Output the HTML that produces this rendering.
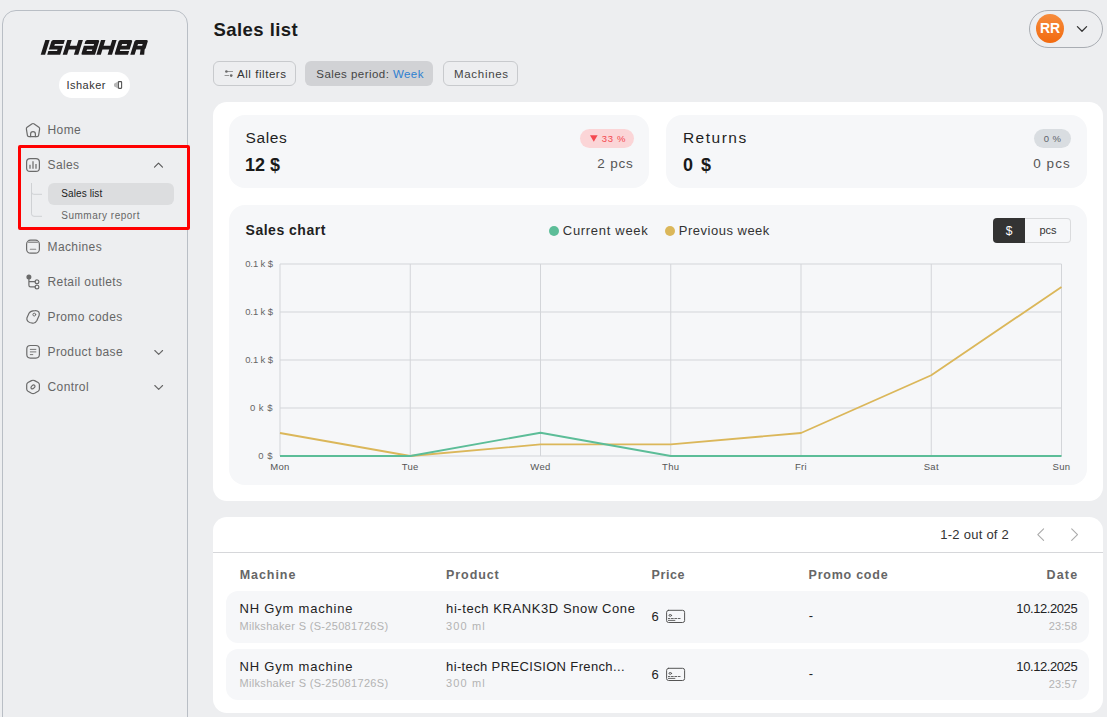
<!DOCTYPE html>
<html><head><meta charset="utf-8">
<style>
html,body{margin:0;padding:0}
body{width:1107px;height:717px;overflow:hidden;background:#edeef0;position:relative;font-family:"Liberation Sans",sans-serif;color:#1f1f1f}
.a{position:absolute}
.t{position:absolute;line-height:1;white-space:nowrap}
svg{position:absolute;overflow:visible}
</style></head><body>

<!-- SIDEBAR -->
<div class="a" style="left:2px;top:10px;width:184px;height:740px;border:1px solid #b9bec5;border-radius:14px;"></div>

<div class="a" style="left:59px;top:72px;width:71px;height:26px;border-radius:13px;background:#fff"></div>
<svg id="logo" style="left:0;top:0" width="200" height="70">
<g transform="translate(0,54.7) skewX(-17.5)" fill="#1c1a1b">
<!-- I -->
<rect x="40.7" y="-14.6" width="4.4" height="14.6"/>
<!-- S -->
<path d="M48.7-14.6H60.2V-10.8H51.5V-8.9H60.2V0H47.2V-3.6H55.9V-5.2H47.2V-13.1Q47.2-14.6 48.7-14.6Z"/>
<!-- H -->
<path d="M62.7-14.6H67.1V-8.9H73.9V-14.6H78.3V0H73.9V-5.2H67.1V0H62.7Z"/>
<!-- a -->
<path d="M82.6-14.6H93.5Q95-14.6 95-13.1V0H82.6Q81.1 0 81.1-1.5V-8.9H90.7V-10.8H81.1V-13.1Q81.1-14.6 82.6-14.6ZM85.4-5.2V-3.6H90.7V-5.2Z" fill-rule="evenodd"/>
<!-- K/H -->
<path d="M96.4-14.6H100.8V-8.9H107.6V-14.6H112V0H107.6V-5.2H100.8V0H96.4Z"/>
<!-- e -->
<path d="M115.9-14.6H126.5Q128-14.6 128-13.1V-5.2H118.7V-3.6H128V0H115.9Q114.4 0 114.4-1.5V-13.1Q114.4-14.6 115.9-14.6ZM118.7-10.8V-8.9H123.7V-10.8Z" fill-rule="evenodd"/>
<!-- R -->
<path d="M131.8-14.6H142Q143.6-14.6 143.6-13.1V-6.7Q143.6-5.8 143-5.2L144.2 0H139.8L138.9-5.2H134.6V0H130.3V-13.1Q130.3-14.6 131.8-14.6ZM134.6-10.8V-8.9H139.3V-10.8Z" fill-rule="evenodd"/>
</g>
</svg>

<svg style="left:0;top:0" width="200" height="420" fill="none" stroke="#6b6b6b" stroke-width="1.2" stroke-linecap="round" stroke-linejoin="round">
<!-- logout -->
<rect x="118.4" y="81.6" width="3.2" height="6.8" rx="0.6" stroke="#555" stroke-width="1.1"/>
<path d="M114 83.8L118 81.5V88.6L114 86.2Z" fill="#b8b8b8" stroke="none"/>
<!-- home -->
<path d="M31.8 123.9Q33 123.1 34.2 123.9L38.9 127.3Q39.8 128 39.6 129.1L38.6 135.3Q38.4 136.6 37.1 136.6H28.9Q27.6 136.6 27.4 135.3L26.4 129.1Q26.2 128 27.1 127.3Z"/>
<path d="M30.6 136.6V134Q30.6 131.6 33 131.6Q35.4 131.6 35.4 134V136.6"/>
<!-- sales -->
<rect x="26.6" y="158.6" width="12.8" height="12.8" rx="3.5"/>
<path d="M30 164.8V168.7M33 161.2V168.7M36 163.9V168.7" stroke="#9a9a9a" stroke-width="1.9" stroke-linecap="butt"/>
<path d="M154.5 167.2L158.5 163.2L162.5 167.2" stroke="#555" stroke-width="1.1"/>
<!-- submenu lines -->
<path d="M31.5 183V213.8Q31.5 216.3 34 216.3H42M31.5 192Q31.5 194.3 33.8 194.3H42" stroke="#cfd1d4" stroke-width="1" stroke-linecap="butt"/>
<!-- machines -->
<rect x="26.6" y="240.2" width="12.8" height="13" rx="4"/>
<path d="M28.5 242.2H37.5" stroke-width="1"/>
<path d="M30.3 249.3H35.7" stroke="#888" stroke-width="1.1"/>
<!-- retail -->
<circle cx="28.9" cy="276.9" r="2.5" fill="#6b6b6b" stroke="none"/>
<path d="M28.9 277V285.2Q28.9 286.9 30.6 286.9H35.2M28.9 281.7H35.2"/>
<circle cx="37" cy="281.7" r="1.9"/>
<circle cx="37" cy="287" r="1.9"/>
<!-- promo -->
<path d="M35.2 310.6C38.4 310.4 40 312.8 39.1 315.6L36.9 320.6C35.9 322.7 34.6 323.4 32.6 323.2C28.3 322.8 26.3 320.4 26.9 317.9L29 313.3C30 311.4 32.6 310.7 35.2 310.6Z"/>
<circle cx="34.3" cy="314.6" r="1.4" stroke-width="1"/>
<!-- product base -->
<rect x="26.8" y="345.5" width="12.6" height="12.6" rx="3.5"/>
<path d="M30.3 349.4H35.9M30.3 351.9H35.9M30.3 354.6H32.8" stroke-width="1" stroke="#777"/>
<path d="M154.8 350.5L158.7 354.3L162.6 350.5" stroke="#666" stroke-width="1.1"/>
<!-- control -->
<path d="M31.5 380.6Q33 379.9 34.6 380.6L38.1 382.5Q39.4 383.3 39.4 384.8V388.9Q39.4 390.4 38.1 391.2L34.6 393.2Q33 393.9 31.5 393.2L28 391.2Q26.7 390.4 26.7 388.9V384.8Q26.7 383.3 28 382.5Z"/>
<ellipse cx="33" cy="386.9" rx="2.3" ry="1.5" transform="rotate(-45 33 386.9)" stroke-width="1.1"/>
<path d="M154.8 385.5L158.7 389.3L162.6 385.5" stroke="#666" stroke-width="1.1"/>
</svg>

<div class="t" style="left:66.6px;top:79.7px;font-size:11px;letter-spacing:.45px;color:#333">Ishaker</div>

<div class="t" style="left:47.5px;top:123.6px;font-size:12px;letter-spacing:.4px;color:#666">Home</div>
<div class="t" style="left:47.5px;top:159px;font-size:12px;letter-spacing:.4px;color:#666">Sales</div>
<div class="a" style="left:48px;top:183px;width:126px;height:22px;border-radius:6px;background:#dcdddf"></div>
<div class="t" style="left:61.3px;top:188.5px;font-size:10px;letter-spacing:.1px;color:#222">Sales list</div>
<div class="t" style="left:61.3px;top:211.1px;font-size:10px;letter-spacing:.5px;color:#666">Summary report</div>
<div class="t" style="left:47.5px;top:241.4px;font-size:12px;letter-spacing:.4px;color:#666">Machines</div>
<div class="t" style="left:47.5px;top:275.9px;font-size:12px;letter-spacing:.4px;color:#666">Retail outlets</div>
<div class="t" style="left:47.5px;top:311.1px;font-size:12px;letter-spacing:.4px;color:#666">Promo codes</div>
<div class="t" style="left:47.5px;top:346.1px;font-size:12px;letter-spacing:.4px;color:#666">Product base</div>
<div class="t" style="left:47.5px;top:381.3px;font-size:12px;letter-spacing:.4px;color:#666">Control</div>

<div class="a" style="left:18px;top:145px;width:166px;height:79px;border:3px solid #ff0000;border-radius:2px"></div>

<!-- MAIN -->
<div class="t" style="left:213.5px;top:21.1px;font-size:18.5px;font-weight:bold;letter-spacing:.45px;color:#1a1a1a">Sales list</div>

<div class="a" style="left:213px;top:61px;width:81px;height:23px;border:1px solid #c8cacd;border-radius:6px"></div>
<div class="t" style="left:237px;top:69.2px;font-size:11.5px;letter-spacing:.55px;color:#333">All filters</div>
<div class="a" style="left:305px;top:61px;width:128px;height:25px;border-radius:6px;background:#d1d2d5"></div>
<div class="t" style="left:316.3px;top:69.1px;font-size:11.5px;letter-spacing:.45px;color:#444">Sales period: <span style="color:#2f80d0">Week</span></div>
<div class="a" style="left:443px;top:61px;width:73px;height:23px;border:1px solid #c8cacd;border-radius:6px"></div>
<div class="t" style="left:454px;top:69.1px;font-size:11.5px;letter-spacing:.69px;color:#444">Machines</div>

<div class="a" style="left:1029px;top:10px;width:72px;height:36px;border:1px solid #a9adb3;border-radius:19px"></div>
<div class="a" style="left:1036px;top:14px;width:28px;height:29px;border-radius:50%;background:linear-gradient(#f68c3c,#f26a0f)"></div>
<div class="t" style="left:1036px;width:28px;text-align:center;top:21px;font-size:14px;font-weight:bold;color:#fff">RR</div>

<div class="a" style="left:213px;top:102px;width:890px;height:399px;border-radius:14px;background:#fff"></div>
<div class="a" style="left:229px;top:115px;width:420px;height:73px;border-radius:16px;background:#f6f7f9"></div>
<div class="a" style="left:666px;top:115px;width:421px;height:73px;border-radius:16px;background:#f6f7f9"></div>
<div class="t" style="left:245.6px;top:130px;font-size:15.5px;letter-spacing:.6px;color:#1f1f1f">Sales</div>
<div class="t" style="left:245.1px;top:155.6px;font-size:18px;font-weight:bold;color:#1a1a1a">12 $</div>
<div class="a" style="left:580px;top:129px;width:54px;height:19px;border-radius:10px;background:#fbd5d7"></div>
<div class="t" style="left:601.8px;top:133.8px;font-size:9.5px;letter-spacing:.67px;color:#f4484f">33 %</div>
<div class="t" style="right:473.4px;top:156.9px;font-size:13.5px;letter-spacing:.8px;color:#555">2 pcs</div>

<div class="t" style="left:682.9px;top:130px;font-size:15.5px;letter-spacing:1.5px;color:#1f1f1f">Returns</div>
<div class="t" style="left:682.9px;top:155.6px;font-size:18px;font-weight:bold;word-spacing:3px;color:#1a1a1a">0 $</div>
<div class="a" style="left:1034px;top:129px;width:37px;height:19px;border-radius:10px;background:#d9dde1"></div>
<div class="t" style="left:1034px;width:37px;text-align:center;top:133.8px;font-size:9.5px;letter-spacing:.3px;color:#5f646b">0 %</div>
<div class="t" style="right:36.2px;top:156.6px;font-size:13.5px;letter-spacing:1.08px;color:#555">0 pcs</div>

<div class="a" style="left:229px;top:205px;width:858px;height:280px;border-radius:16px;background:#f6f7f9"></div>
<div class="t" style="left:245.6px;top:223px;font-size:14px;font-weight:bold;letter-spacing:.5px;color:#1f1f1f">Sales chart</div>

<div class="a" style="left:549px;top:225.7px;width:10px;height:10px;border-radius:50%;background:#5cbd98"></div>
<div class="t" style="left:562.8px;top:224.2px;font-size:13px;letter-spacing:.7px;color:#333">Current week</div>
<div class="a" style="left:665px;top:225.7px;width:10px;height:10px;border-radius:50%;background:#dbb75a"></div>
<div class="t" style="left:678.8px;top:224.2px;font-size:13px;letter-spacing:.5px;color:#333">Previous week</div>

<div class="a" style="left:993px;top:218px;width:32px;height:25px;border-radius:4px 0 0 4px;background:#333"></div>
<div class="t" style="left:993px;width:32px;text-align:center;top:225px;font-size:12px;color:#fff">$</div>
<div class="a" style="left:1025px;top:218px;width:45px;height:23px;border:1px solid #dadbdd;border-left:none;border-radius:0 4px 4px 0"></div>
<div class="t" style="left:1025px;width:46px;text-align:center;top:225px;font-size:11px;color:#333">pcs</div>

<svg style="left:0;top:0" width="1107" height="717">
<g stroke="#d3d5d9" stroke-width="1" fill="none">
<path d="M280 264H1061.5M280 312H1061.5M280 360H1061.5M280 408H1061.5M280 456H1061.5"/>
<path d="M280 264V456M410.25 264V456M540.5 264V456M670.75 264V456M801 264V456M931.25 264V456M1061.5 264V456"/>
</g>
<polyline fill="none" stroke="#dbb75a" stroke-width="1.8" stroke-linejoin="round" points="280,433 410.25,456 540.5,444.4 670.75,444.4 801,433 931.25,375.2 1061.5,287"/>
<polyline fill="none" stroke="#5cbd98" stroke-width="1.9" stroke-linejoin="round" points="280,456 410.25,456 540.5,432.7 670.75,456 801,456 931.25,456 1061.5,456"/>
<g font-family="Liberation Sans" font-size="9.5" letter-spacing=".2" fill="#666" text-anchor="end">
<text x="273" y="267" letter-spacing="-.1">0.1 k $</text>
<text x="273" y="315" letter-spacing="-.1">0.1 k $</text>
<text x="273" y="363" letter-spacing="-.1">0.1 k $</text>
<text x="273" y="411" letter-spacing=".5">0 k $</text>
<text x="273" y="459" letter-spacing=".5">0 $</text>
</g>
<g font-family="Liberation Sans" font-size="9.5" letter-spacing=".3" fill="#555" text-anchor="middle">
<text x="280" y="470">Mon</text>
<text x="410.25" y="470">Tue</text>
<text x="540.5" y="470">Wed</text>
<text x="670.75" y="470">Thu</text>
<text x="801" y="470">Fri</text>
<text x="931.25" y="470">Sat</text>
<text x="1061.5" y="470">Sun</text>
</g>
</svg>



<!-- TABLE -->
<div class="a" style="left:213px;top:517px;width:890px;height:196px;border-radius:14px;background:#fff"></div>
<div class="t" style="left:940.3px;top:528.3px;font-size:13px;letter-spacing:.25px;color:#333">1-2 out of 2</div>
<div class="a" style="left:213px;top:552px;width:890px;height:1px;background:#d6d7da"></div>
<div class="t" style="left:239.7px;top:568.7px;font-size:12.5px;font-weight:bold;letter-spacing:.95px;color:#666">Machine</div>
<div class="t" style="left:446.1px;top:568.7px;font-size:12.5px;font-weight:bold;letter-spacing:.9px;color:#666">Product</div>
<div class="t" style="left:651.5px;top:568.7px;font-size:12.5px;font-weight:bold;letter-spacing:.6px;color:#666">Price</div>
<div class="t" style="left:808.6px;top:568.7px;font-size:12.5px;font-weight:bold;letter-spacing:.75px;color:#666">Promo code</div>
<div class="t" style="right:28.7px;top:568.7px;font-size:12.5px;font-weight:bold;letter-spacing:1.17px;color:#666">Date</div>

<div class="a" style="left:226px;top:591px;width:863px;height:52px;border-radius:12px;background:#f6f7f9"></div>
<div class="a" style="left:226px;top:649px;width:863px;height:51px;border-radius:12px;background:#f6f7f9"></div>

<div class="t" style="left:239.5px;top:602px;font-size:13px;letter-spacing:.8px;color:#222">NH Gym machine</div>
<div class="t" style="left:239.5px;top:620.5px;font-size:11px;letter-spacing:.32px;color:#b3b3b3">Milkshaker S (S-25081726S)</div>
<div class="t" style="left:446.1px;top:602px;font-size:13px;letter-spacing:.58px;color:#222">hi-tech KRANK3D Snow Cone</div>
<div class="t" style="left:446.1px;top:620.5px;font-size:11px;letter-spacing:1.1px;color:#b3b3b3">300 ml</div>
<div class="t" style="left:651.5px;top:609.5px;font-size:13px;color:#222">6</div>
<div class="t" style="left:808.7px;top:608.5px;font-size:13px;color:#222">-</div>
<div class="t" style="right:29.8px;top:602.2px;font-size:13px;letter-spacing:-.42px;color:#222">10.12.2025</div>
<div class="t" style="right:29.8px;top:620.8px;font-size:11px;letter-spacing:.2px;color:#b3b3b3">23:58</div>

<div class="t" style="left:239.5px;top:660px;font-size:13px;letter-spacing:.8px;color:#222">NH Gym machine</div>
<div class="t" style="left:239.5px;top:677.7px;font-size:11px;letter-spacing:.32px;color:#b3b3b3">Milkshaker S (S-25081726S)</div>
<div class="t" style="left:446.1px;top:660px;font-size:13px;letter-spacing:.36px;color:#222">hi-tech PRECISION French...</div>
<div class="t" style="left:446.1px;top:677.7px;font-size:11px;letter-spacing:1.1px;color:#b3b3b3">300 ml</div>
<div class="t" style="left:651.5px;top:667.5px;font-size:13px;color:#222">6</div>
<div class="t" style="left:808.7px;top:666.5px;font-size:13px;color:#222">-</div>
<div class="t" style="right:29.8px;top:660px;font-size:13px;letter-spacing:-.42px;color:#222">10.12.2025</div>
<div class="t" style="right:29.8px;top:678.7px;font-size:11px;letter-spacing:.2px;color:#b3b3b3">23:57</div>

<svg style="left:0;top:0" width="1107" height="717" fill="none" stroke-linecap="round" stroke-linejoin="round">
<!-- filter icon -->
<path d="M226.3 71.5H232.6M225 75.5H228.6" stroke="#8a8a8a" stroke-width="0.9"/>
<circle cx="226.4" cy="71.5" r="1.3" fill="#6a6a6a"/>
<circle cx="231.2" cy="75.6" r="1.35" fill="#6a6a6a"/>
<!-- avatar chevron -->
<path d="M1077.4 26.6L1082 31.3L1086.6 26.6" stroke="#333" stroke-width="1.25"/>
<!-- badge triangle -->
<path d="M590 135.2H597.6L593.8 141.8Z" fill="#f4484f"/>
<!-- pagination -->
<path d="M1043.6 528.8L1037.8 534.6L1043.6 540.4M1071.7 528.8L1077.5 534.6L1071.7 540.4" stroke="#aaa" stroke-width="1.1"/>
<!-- card icons -->
<g stroke="#555" stroke-width="1">
<rect x="666.6" y="610.3" width="18" height="12.2" rx="2"/>
<ellipse cx="670.3" cy="615.4" rx="1.3" ry="0.9"/>
<path d="M668.4 618.5H669.9M671.4 618.5H673.3M674.8 618.5H676.7M678.2 618.5H680.1M668.4 620.4H674.9" stroke-width="0.9"/>
<rect x="666.6" y="668.3" width="18" height="12.2" rx="2"/>
<ellipse cx="670.3" cy="673.4" rx="1.3" ry="0.9"/>
<path d="M668.4 676.5H669.9M671.4 676.5H673.3M674.8 676.5H676.7M678.2 676.5H680.1M668.4 678.4H674.9" stroke-width="0.9"/>
</g>
</svg>
</body></html>
